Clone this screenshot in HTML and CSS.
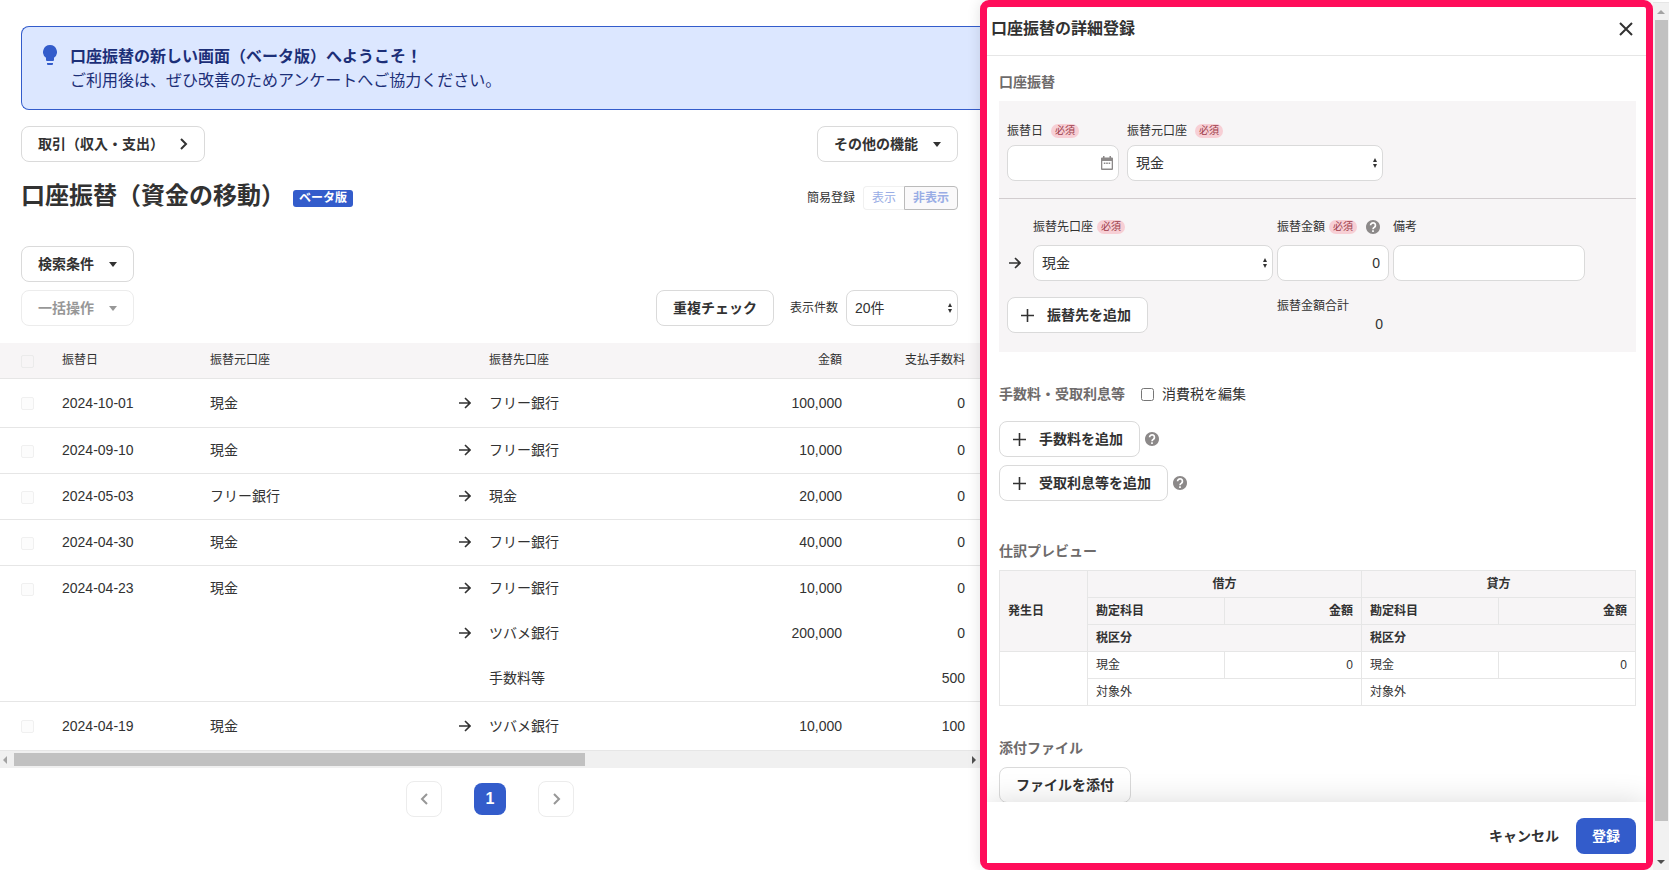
FILE: index.html
```html
<!DOCTYPE html>
<html lang="ja">
  <head>
    <meta charset="UTF-8" />
    <meta name="viewport" content="width=device-width, initial-scale=1.0" />
    <title>口座振替（資金の移動）</title>
    <link rel="stylesheet" href="styles.css">
  </head>
  <body>
    <!-- shared icons -->
    <svg class="sprite" aria-hidden="true">
      <symbol id="arrow" viewBox="0 0 12 12">
        <path d="M0 6h11M6 1l5 5-5 5" fill="none" stroke="currentColor" stroke-width="1.6" />
      </symbol>
      <symbol id="caret" viewBox="0 0 8 5">
        <path d="M0 0h8L4 5z" fill="currentColor" />
      </symbol>
      <symbol id="updown" viewBox="0 0 4 10">
        <path d="M2 0l2 4H0zM2 10l2-4H0z" fill="currentColor" />
      </symbol>
      <symbol id="plus" viewBox="0 0 13 13">
        <path d="M6.5 0v13M0 6.5h13" stroke="currentColor" stroke-width="1.6" />
      </symbol>
      <symbol id="chevron" viewBox="0 0 9 12">
        <path d="M2 1l5 5-5 5" fill="none" stroke="currentColor" stroke-width="2" />
      </symbol>
      <symbol id="help" viewBox="2 2 20 20">
        <path d="M12 2C6.480 2 2 6.480 2 12s4.480 10 10 10 10-4.480 10-10S17.520 2 12 2z" fill="currentColor" />
        <path d="M8.500 9.500a3.500 3.500 0 1 1 5.600 2.800Q12 13.500 12 15.200M12 16.700v2.500" fill="none" stroke="#fff" stroke-width="2.400" />
      </symbol>
    </svg>

    <main class="page">
      <div class="notice">
        <svg class="bulb" viewBox="0 0 14 20">
          <path d="M7 0a7 7 0 0 0-4 12.700V15q0 1 1 1h6q1 0 1-1v-2.300A7 7 0 0 0 7 0zM4 18h6v1q0 1-1 1H5q-1 0-1-1z" fill="#335ccb" />
        </svg>
        <div>
          <strong>口座振替の新しい画面（ベータ版）へようこそ！</strong>
          <p>ご利用後は、ぜひ改善のためアンケートへご協力ください。</p>
        </div>
      </div>

      <div class="row">
        <button type="button" class="btn">取引（収入・支出）<svg class="chevron"><use href="#chevron" /></svg></button>
        <button type="button" class="btn">その他の機能<svg class="caret"><use href="#caret" /></svg></button>
      </div>

      <div class="row title-row">
        <h1>口座振替（資金の移動）</h1>
        <span class="beta">ベータ版</span>
        <span class="toggle-label">簡易登録</span>
        <div class="toggle">
          <button type="button" disabled>表示</button>
          <button type="button" class="on" disabled>非表示</button>
        </div>
      </div>

      <div class="row">
        <button type="button" class="btn">検索条件<svg class="caret"><use href="#caret" /></svg></button>
      </div>
      <div class="row tools">
        <button type="button" class="btn" disabled>一括操作<svg class="caret"><use href="#caret" /></svg></button>
        <div class="tools-right">
          <button type="button" class="btn">重複チェック</button>
          <label for="per-page">表示件数</label>
          <div class="select per-page">
            <select id="per-page"><option>20件</option></select>
            <svg><use href="#updown" /></svg>
          </div>
        </div>
      </div>

      <table class="list">
        <colgroup>
          <col class="c-check"><col class="c-date"><col class="c-from"><col class="c-arrow"><col><col class="c-amount"><col class="c-fee">
        </colgroup>
        <thead>
          <tr>
            <th><input type="checkbox" aria-label="すべて選択" disabled></th>
            <th>振替日</th>
            <th>振替元口座</th>
            <th></th>
            <th>振替先口座</th>
            <th class="num">金額</th>
            <th class="num">支払手数料</th>
          </tr>
        </thead>
        <tbody>
          <tr class="tall">
            <td><input type="checkbox" aria-label="2024-10-01" disabled></td>
            <td>2024-10-01</td>
            <td>現金</td>
            <td><svg class="arrow"><use href="#arrow" /></svg></td>
            <td>フリー銀行</td>
            <td class="num">100,000</td>
            <td class="num">0</td>
          </tr>
          <tr>
            <td><input type="checkbox" aria-label="2024-09-10" disabled></td>
            <td>2024-09-10</td>
            <td>現金</td>
            <td><svg class="arrow"><use href="#arrow" /></svg></td>
            <td>フリー銀行</td>
            <td class="num">10,000</td>
            <td class="num">0</td>
          </tr>
          <tr>
            <td><input type="checkbox" aria-label="2024-05-03" disabled></td>
            <td>2024-05-03</td>
            <td>フリー銀行</td>
            <td><svg class="arrow"><use href="#arrow" /></svg></td>
            <td>現金</td>
            <td class="num">20,000</td>
            <td class="num">0</td>
          </tr>
          <tr>
            <td><input type="checkbox" aria-label="2024-04-30" disabled></td>
            <td>2024-04-30</td>
            <td>現金</td>
            <td><svg class="arrow"><use href="#arrow" /></svg></td>
            <td>フリー銀行</td>
            <td class="num">40,000</td>
            <td class="num">0</td>
          </tr>
          <tr class="open">
            <td><input type="checkbox" aria-label="2024-04-23" disabled></td>
            <td>2024-04-23</td>
            <td>現金</td>
            <td><svg class="arrow"><use href="#arrow" /></svg></td>
            <td>フリー銀行</td>
            <td class="num">10,000</td>
            <td class="num">0</td>
          </tr>
          <tr class="open">
            <td></td>
            <td></td>
            <td></td>
            <td><svg class="arrow"><use href="#arrow" /></svg></td>
            <td>ツバメ銀行</td>
            <td class="num">200,000</td>
            <td class="num">0</td>
          </tr>
          <tr>
            <td></td>
            <td></td>
            <td></td>
            <td></td>
            <td>手数料等</td>
            <td></td>
            <td class="num">500</td>
          </tr>
          <tr class="tall">
            <td><input type="checkbox" aria-label="2024-04-19" disabled></td>
            <td>2024-04-19</td>
            <td>現金</td>
            <td><svg class="arrow"><use href="#arrow" /></svg></td>
            <td>ツバメ銀行</td>
            <td class="num">10,000</td>
            <td class="num">100</td>
          </tr>
        </tbody>
      </table>
      <div class="hscroll">
        <svg viewBox="0 0 4 8"><path d="M4 0v8L0 4z" fill="#a3a3a3" /></svg>
        <div class="track"><div class="thumb"></div></div>
        <svg viewBox="0 0 4 8"><path d="M0 0v8l4-4z" fill="#505050" /></svg>
      </div>

      <nav class="pager">
        <button type="button" class="btn" aria-label="前へ" disabled><svg class="chevron prev"><use href="#chevron" /></svg></button>
        <button type="button" class="current">1</button>
        <button type="button" class="btn" aria-label="次へ" disabled><svg class="chevron"><use href="#chevron" /></svg></button>
      </nav>
    </main>

    <aside class="drawer">
      <header>
        <h2>口座振替の詳細登録</h2>
        <button type="button" class="close" aria-label="閉じる">
          <svg viewBox="0 0 14 14"><path d="M1 1l12 12M13 1L1 13" stroke="currentColor" stroke-width="2" /></svg>
        </button>
      </header>

      <div class="drawer-body">
        <h3>口座振替</h3>
        <div class="form">
          <div class="source">
            <div class="field date">
              <label for="date">振替日<span class="required">必須</span></label>
              <div class="date-box">
                <input type="text" id="date">
                <svg viewBox="0 0 12 14"><path d="M2 0h1.500v1.500h5V0H10v1.500h1q1 0 1 1V13q0 1-1 1H1q-1 0-1-1V2.500q0-1 1-1h1zM1.300 5v7.600h9.400V5zM2.800 6.500h1.600v1.500H2.800zM5.200 6.500h1.600v1.500H5.200zM7.600 6.500h1.600v1.500H7.600z" fill="currentColor" fill-rule="evenodd" /></svg>
              </div>
            </div>
            <div class="field from">
              <label for="from">振替元口座<span class="required">必須</span></label>
              <div class="select">
                <select id="from"><option>現金</option></select>
                <svg><use href="#updown" /></svg>
              </div>
            </div>
          </div>

          <div class="target">
            <label class="to-label" for="to">振替先口座<span class="required">必須</span></label>
            <div class="amount-label">
              <label for="amount">振替金額<span class="required">必須</span></label>
              <svg class="help"><use href="#help" /></svg>
            </div>
            <label for="memo">備考</label>

            <svg class="arrow"><use href="#arrow" /></svg>
            <div class="select">
              <select id="to"><option>現金</option></select>
              <svg><use href="#updown" /></svg>
            </div>
            <input type="text" id="amount" class="num" value="0">
            <input type="text" id="memo">

            <div class="add-cell">
              <button type="button" class="btn add"><svg><use href="#plus" /></svg>振替先を追加</button>
            </div>
            <div class="total">
              <span>振替金額合計</span>
              <output>0</output>
            </div>
          </div>
        </div>

        <div class="fees-head">
          <h3>手数料・受取利息等</h3>
          <input type="checkbox" id="tax">
          <label for="tax">消費税を編集</label>
        </div>
        <div class="add-line">
          <button type="button" class="btn add"><svg><use href="#plus" /></svg>手数料を追加</button>
          <svg class="help"><use href="#help" /></svg>
        </div>
        <div class="add-line">
          <button type="button" class="btn add"><svg><use href="#plus" /></svg>受取利息等を追加</button>
          <svg class="help"><use href="#help" /></svg>
        </div>

        <h3 class="preview-title">仕訳プレビュー</h3>
        <table class="journal">
          <colgroup>
            <col class="j-date"><col><col><col><col>
          </colgroup>
          <thead>
            <tr>
              <th rowspan="3">発生日</th>
              <th colspan="2" class="center">借方</th>
              <th colspan="2" class="center">貸方</th>
            </tr>
            <tr>
              <th>勘定科目</th>
              <th class="num">金額</th>
              <th>勘定科目</th>
              <th class="num">金額</th>
            </tr>
            <tr>
              <th colspan="2">税区分</th>
              <th colspan="2">税区分</th>
            </tr>
          </thead>
          <tbody>
            <tr>
              <td rowspan="2"></td>
              <td>現金</td>
              <td class="num">0</td>
              <td>現金</td>
              <td class="num">0</td>
            </tr>
            <tr>
              <td colspan="2">対象外</td>
              <td colspan="2">対象外</td>
            </tr>
          </tbody>
        </table>

        <h3 class="files-title">添付ファイル</h3>
        <button type="button" class="btn">ファイルを添付</button>
      </div>

      <footer>
        <button type="button" class="cancel">キャンセル</button>
        <button type="submit" class="submit">登録</button>
      </footer>
    </aside>

    <div class="vscroll">
      <svg viewBox="0 0 8 4"><path d="M0 4h8L4 0z" fill="#a3a3a3" /></svg>
      <div class="track"><div class="thumb"></div></div>
      <svg viewBox="0 0 8 4"><path d="M0 0h8L4 4z" fill="#505050" /></svg>
    </div>
  </body>
</html>
```
FILE: styles.css
```css
* {
  box-sizing: border-box;
}

body {
  margin: 0;
  display: flex;
  height: 100vh;
  overflow: hidden;
  background-color: #fff;
  color: #323232;
  font-family: "Liberation Sans", "Noto Sans CJK JP", sans-serif;
  font-size: 14px;
  line-height: 20px;
}

h1,
h2,
h3,
p {
  margin: 0;
}

button,
input,
select {
  font: inherit;
  color: inherit;
  margin: 0;
}

svg {
  display: block;
  flex: none;
}

.sprite {
  position: absolute;
  width: 0;
  height: 0;
}

.num {
  text-align: right;
}

/* buttons and fields */
.btn {
  display: inline-flex;
  align-items: center;
  gap: 15px;
  height: 36px;
  padding: 0 16px;
  border: 1px solid #dadada;
  border-radius: 8px;
  background-color: #fff;
  font-weight: bold;
  white-space: nowrap;
}

.btn:disabled {
  opacity: 0.5;
}

.caret {
  width: 8px;
  height: 5px;
}

.chevron {
  width: 9px;
  height: 12px;
}

.arrow {
  width: 12px;
  height: 12px;
}

.help {
  width: 14px;
  height: 14px;
  color: #8c8989;
}

.add {
  gap: 13px;
  padding-left: 13px;
}

.add svg {
  width: 13px;
  height: 13px;
}

.select {
  position: relative;
}

select,
input[type="text"] {
  display: block;
  appearance: none;
  width: 100%;
  height: 36px;
  padding: 0 8px;
  border: 1px solid #dadada;
  border-radius: 8px;
  background-color: #fff;
}

.select svg {
  position: absolute;
  right: 6px;
  top: 13px;
  width: 4px;
  height: 10px;
}

/* main page */
.page {
  flex: 1;
  min-width: 0;
  padding-top: 26px;
}

.notice {
  display: flex;
  gap: 13px;
  margin: 0 0 16px 21px;
  padding: 18px 21px 16px;
  border: 1px solid #335ccb;
  border-right: none;
  border-radius: 8px 0 0 8px;
  background-color: #dce7ff;
  color: #1c2f78;
  font-size: 16px;
  line-height: 24px;
}

.bulb {
  width: 14px;
  height: 20px;
}

.row {
  display: flex;
  justify-content: space-between;
  padding: 0 22px 0 21px;
}

.title-row {
  align-items: center;
  height: 40px;
  margin: 16px 0 28px;
}

h1 {
  margin-bottom: 4px;
  font-size: 24px;
  line-height: 36px;
}

.beta {
  margin-left: 8px;
  padding: 0 6px;
  border-radius: 3px;
  background-color: #335ccb;
  color: #fff;
  font-size: 12px;
  font-weight: bold;
  line-height: 17px;
}

.toggle-label {
  margin: 0 8px 0 auto;
  font-size: 12px;
}

.toggle {
  display: flex;
}

.toggle button {
  height: 24px;
  padding: 0 8px;
  border: 1px solid #f0f0f0;
  border-right: none;
  border-radius: 4px 0 0 4px;
  background-color: #fff;
  color: #99ade5;
  font-size: 12px;
}

.toggle .on {
  border: 1px solid #bbb;
  border-radius: 0 4px 4px 0;
  background-color: #faf9fa;
  font-weight: bold;
}

.tools {
  margin: 8px 0 17px;
}

.tools-right {
  display: flex;
  align-items: center;
}

.tools-right label {
  margin: 0 8px 0 16px;
  font-size: 12px;
}

.per-page {
  width: 112px;
}

/* transfer list */
.list {
  width: 100%;
  table-layout: fixed;
  border-collapse: separate;
  border-spacing: 0;
}

.c-check {
  width: 62px;
}

.c-date {
  width: 148px;
}

.c-from {
  width: 249px;
}

.c-arrow {
  width: 30px;
}

.c-amount {
  width: 120px;
}

.c-fee {
  width: 138px;
}

.list th,
.list td {
  height: 46px;
  padding: 0 0 1px;
  border-bottom: 1px solid #e6e6e6;
  text-align: left;
}

.list th {
  height: 36px;
  background-color: #f7f5f6;
  font-size: 12px;
  font-weight: normal;
}

.list .num {
  text-align: right;
}

.list th:last-child,
.list td:last-child {
  padding-right: 15px;
}

.list th:first-child,
.list td:first-child {
  padding: 1px 0 0 21px;
}

.list .tall td {
  height: 49px;
}

.list .open td {
  height: 45px;
  border-bottom: none;
}

.list input {
  display: block;
  appearance: none;
  width: 13px;
  height: 13px;
  border: 1px solid #f0f0f0;
  border-radius: 2px;
  background-color: #fcfcfc;
}

.list th input {
  border-color: #ebebeb;
  background-color: transparent;
}

.hscroll {
  display: flex;
  align-items: center;
  gap: 7px;
  height: 17px;
  padding: 0 4px 0 3px;
  background-color: #f0f0f0;
}

.hscroll svg {
  width: 4px;
  height: 8px;
}

.track {
  flex: 1;
}

.hscroll .thumb {
  width: 60%;
  height: 13px;
  background-color: #c1c1c1;
}

.pager {
  display: flex;
  justify-content: center;
  align-items: center;
  gap: 32px;
  margin-top: 13px;
}

.pager .btn {
  width: 36px;
  padding: 0;
  justify-content: center;
}

.prev {
  transform: scaleX(-1);
}

.current {
  width: 32px;
  height: 32px;
  padding: 0;
  border: none;
  border-radius: 8px;
  background-color: #335ccb;
  color: #fff;
  font-size: 16px;
  font-weight: bold;
}

/* detail drawer */
.drawer {
  display: flex;
  flex-direction: column;
  flex: none;
  width: 673px;
  border: 7px solid #ff0d5a;
  border-radius: 9px;
  background-color: #fff;
  box-shadow: 0 0 14px rgba(0, 0, 0, 0.12);
}

.drawer header {
  display: flex;
  justify-content: space-between;
  align-items: center;
  flex: none;
  height: 49px;
  padding: 0 13px 4px 4px;
  border-bottom: 1px solid #e6e6e6;
}

h2 {
  font-size: 16px;
  line-height: 24px;
}

.close {
  padding: 0;
  border: none;
  background: none;
}

.close svg {
  width: 14px;
  height: 14px;
}

.drawer-body {
  flex: 1;
  min-height: 0;
  padding: 16px 10px 0 12px;
  overflow: hidden;
}

h3 {
  color: #6e6b6b;
  font-size: 14px;
  line-height: 20px;
  margin-bottom: 9px;
}

.form {
  background-color: #f7f5f6;
  font-size: 12px;
}

.form select,
.form input {
  font-size: 14px;
}

.source {
  display: flex;
  gap: 8px;
  padding: 20px 8px 17px;
  border-bottom: 1px solid #d2cdcf;
}

.form label {
  display: flex;
  align-items: center;
}

.required {
  margin-left: 4px;
  padding: 0 4px;
  border-radius: 7px;
  background-color: #f7cfd5;
  color: #9c3c4a;
  font-size: 10px;
  line-height: 14px;
}

.source .required {
  margin-left: 8px;
}

.source label {
  margin-bottom: 4px;
}

.date {
  width: 112px;
}

.from {
  width: 256px;
}

.date-box {
  position: relative;
}

.date-box svg {
  position: absolute;
  right: 6px;
  top: 11px;
  width: 12px;
  height: 14px;
  color: #8c8989;
}

.target {
  display: grid;
  grid-template-columns: 22px 240px 112px 192px;
  column-gap: 4px;
  row-gap: 8px;
  align-items: center;
  padding: 18px 8px 19px;
}

.to-label {
  grid-column: 2;
}

.amount-label {
  display: flex;
  align-items: center;
  gap: 9px;
}

.target > .arrow {
  margin-left: 2px;
}

.add-cell {
  grid-column: 1 / 3;
  margin-top: 8px;
  font-size: 14px;
}

.total {
  display: flex;
  flex-direction: column;
  margin-top: 8px;
  line-height: 18px;
}

.total output {
  padding-right: 6px;
  font-size: 14px;
  text-align: right;
}

.fees-head {
  display: flex;
  align-items: center;
  margin: 32px 0 17px;
}

.fees-head h3 {
  margin: 0 16px 0 0;
}

.fees-head input {
  width: 13px;
  height: 13px;
  margin-right: 8px;
}

.add-line {
  display: flex;
  align-items: center;
  gap: 5px;
  margin-bottom: 8px;
}

.preview-title {
  margin-top: 40px;
}

.files-title {
  margin-top: 32px;
}

.journal {
  width: 100%;
  table-layout: fixed;
  border-collapse: collapse;
  font-size: 12px;
}

.j-date {
  width: 88px;
}

.journal th,
.journal td {
  height: 27px;
  padding: 0 8px;
  border: 1px solid #e6e6e6;
  text-align: left;
}

.journal th {
  background-color: #f7f5f6;
}

.journal .center {
  text-align: center;
}

.journal .num {
  text-align: right;
}

.drawer footer {
  position: relative;
  display: flex;
  justify-content: flex-end;
  align-items: center;
  gap: 1px;
  flex: none;
  height: 61px;
  padding: 7px 10px 0;
  background-color: #fff;
  box-shadow: 0 0 30px rgba(0, 0, 0, 0.15);
  clip-path: inset(-40px 0 0 0);
}

.cancel,
.submit {
  height: 36px;
  padding: 0 16px;
  border: none;
  border-radius: 8px;
  background-color: transparent;
  font-weight: bold;
}

.submit {
  background-color: #335ccb;
  color: #fff;
}

/* window scrollbar */
.vscroll {
  display: flex;
  flex-direction: column;
  align-items: center;
  gap: 6px;
  flex: none;
  width: 16px;
  margin-top: 2px;
  padding: 7px 1px 6px;
  border-top: 1px solid #e6e6e6;
  background-color: #f1f1f1;
}

.vscroll svg {
  width: 8px;
  height: 4px;
}

.vscroll .thumb {
  width: 13px;
  height: 96%;
  background-color: #c1c1c1;
}
```
